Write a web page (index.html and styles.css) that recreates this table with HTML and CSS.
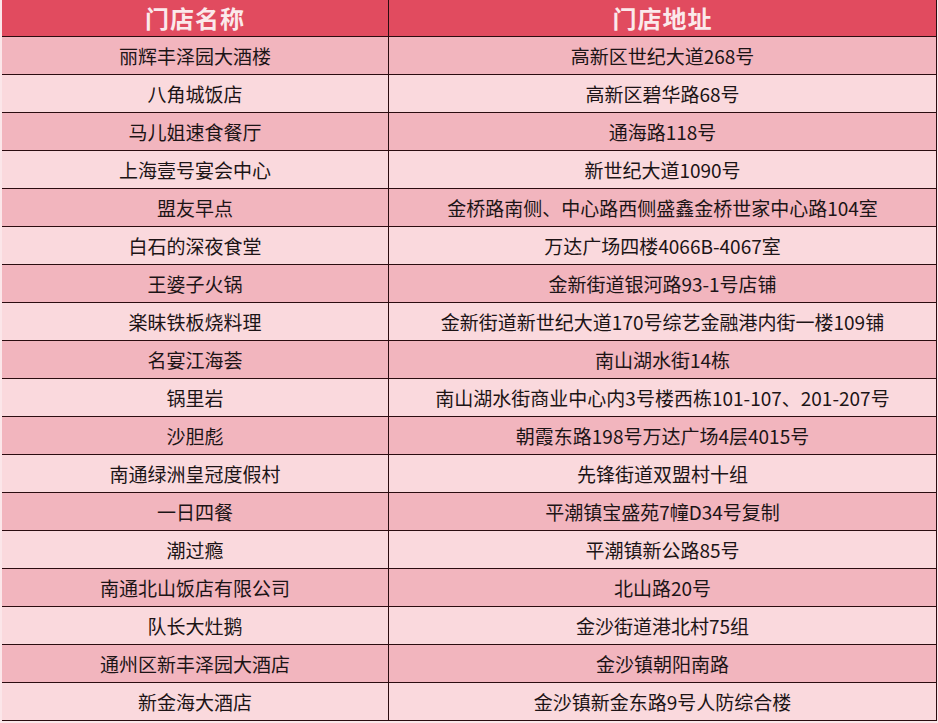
FILE: index.html
```html
<!DOCTYPE html>
<html lang="zh-CN">
<head>
<meta charset="utf-8">
<title>门店列表</title>
<link rel="stylesheet" href="styles.css">
</head>
<body>
<table class="stores">
  <colgroup><col class="c-name"><col class="c-addr"></colgroup>
  <thead>
    <tr><th>门店名称</th><th>门店地址</th></tr>
  </thead>
  <tbody>
    <tr><td>丽辉丰泽园大酒楼</td><td>高新区世纪大道268号</td></tr>
    <tr><td>八角城饭店</td><td>高新区碧华路68号</td></tr>
    <tr><td>马儿姐速食餐厅</td><td>通海路118号</td></tr>
    <tr><td>上海壹号宴会中心</td><td>新世纪大道1090号</td></tr>
    <tr><td>盟友早点</td><td>金桥路南侧、中心路西侧盛鑫金桥世家中心路104室</td></tr>
    <tr><td>白石的深夜食堂</td><td>万达广场四楼4066B-4067室</td></tr>
    <tr><td>王婆子火锅</td><td>金新街道银河路93-1号店铺</td></tr>
    <tr><td>楽昧铁板烧料理</td><td>金新街道新世纪大道170号综艺金融港内街一楼109铺</td></tr>
    <tr><td>名宴江海荟</td><td>南山湖水街14栋</td></tr>
    <tr><td>锅里岩</td><td>南山湖水街商业中心内3号楼西栋101-107、201-207号</td></tr>
    <tr><td>沙胆彪</td><td>朝霞东路198号万达广场4层4015号</td></tr>
    <tr><td>南通绿洲皇冠度假村</td><td>先锋街道双盟村十组</td></tr>
    <tr><td>一日四餐</td><td>平潮镇宝盛苑7幢D34号复制</td></tr>
    <tr><td>潮过瘾</td><td>平潮镇新公路85号</td></tr>
    <tr><td>南通北山饭店有限公司</td><td>北山路20号</td></tr>
    <tr><td>队长大灶鹅</td><td>金沙街道港北村75组</td></tr>
    <tr><td>通州区新丰泽园大酒店</td><td>金沙镇朝阳南路</td></tr>
    <tr><td>新金海大酒店</td><td>金沙镇新金东路9号人防综合楼</td></tr>
  </tbody>
</table>
</body>
</html>
```

FILE: styles.css
```css
html, body {
  margin: 0;
  padding: 0;
  background: #fbe6e9;
}
body {
  padding-left: 2px;
  font-family: "Microsoft YaHei", "Noto Sans CJK SC", "Noto Sans", sans-serif;
}
.stores {
  border-collapse: separate;
  border-spacing: 0;
  table-layout: fixed;
  width: 935px;
}
.c-name { width: 387px; }
.c-addr { width: 548px; }
.stores th,
.stores td {
  padding: 0;
  box-sizing: border-box;
  text-align: center;
  vertical-align: middle;
  border-right: 1px solid #2b0c10;
  border-bottom: 1px solid #2b0c10;
  white-space: nowrap;
  overflow: hidden;
}
.stores th {
  height: 37px;
  background: #e14b5f;
  color: #fbe9eb;
  font-size: 24px;
  font-weight: 700;
  letter-spacing: 1px;
  line-height: 34px;
}
.stores td {
  height: 38px;
  font-size: 19px;
  line-height: 36px;
  color: #1c1416;
}
.stores tbody tr:nth-child(odd) td { background: #f2b5be; }
.stores tbody tr:nth-child(even) td { background: #fad9dd; }
```
